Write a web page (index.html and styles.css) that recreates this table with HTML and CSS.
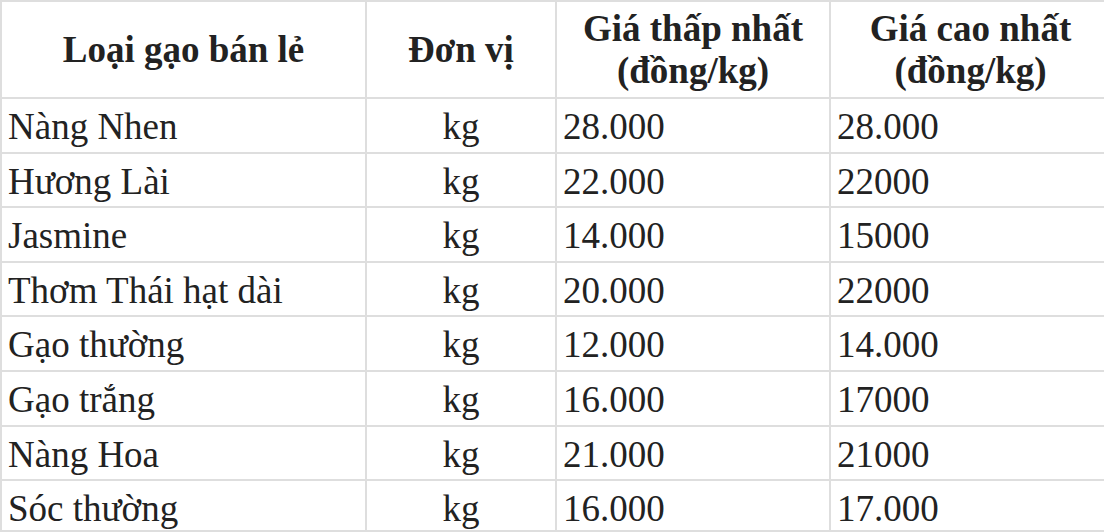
FILE: index.html
```html
<!DOCTYPE html>
<html lang="vi">
<head>
<meta charset="utf-8">
<title>Giá gạo bán lẻ</title>
<link rel="stylesheet" href="styles.css">
</head>
<body>
<table class="price-table">
  <colgroup>
    <col class="c-name">
    <col class="c-unit">
    <col class="c-low">
    <col class="c-high">
  </colgroup>
  <thead>
    <tr>
      <th>Loại gạo bán lẻ</th>
      <th>Đơn vị</th>
      <th>Giá thấp nhất<br>(đồng/kg)</th>
      <th>Giá cao nhất<br>(đồng/kg)</th>
    </tr>
  </thead>
  <tbody>
    <tr><td>Nàng Nhen</td><td class="unit">kg</td><td>28.000</td><td>28.000</td></tr>
    <tr><td>Hương Lài</td><td class="unit">kg</td><td>22.000</td><td>22000</td></tr>
    <tr><td>Jasmine</td><td class="unit">kg</td><td>14.000</td><td>15000</td></tr>
    <tr><td>Thơm Thái hạt dài</td><td class="unit">kg</td><td>20.000</td><td>22000</td></tr>
    <tr><td>Gạo thường</td><td class="unit">kg</td><td>12.000</td><td>14.000</td></tr>
    <tr><td>Gạo trắng</td><td class="unit">kg</td><td>16.000</td><td>17000</td></tr>
    <tr><td>Nàng Hoa</td><td class="unit">kg</td><td>21.000</td><td>21000</td></tr>
    <tr class="last"><td>Sóc thường</td><td class="unit">kg</td><td>16.000</td><td>17.000</td></tr>
  </tbody>
</table>
</body>
</html>
```
FILE: styles.css
```css
html, body {
  margin: 0;
  padding: 0;
  background: #fff;
  overflow: hidden;
}
.price-table {
  border-collapse: collapse;
  table-layout: fixed;
  width: 1110px;
  font-family: "Liberation Serif", "Times New Roman", serif;
  font-size: 37px;
  color: #222;
}
.c-name { width: 365px; }
.c-unit { width: 190px; }
.c-low { width: 274px; }
.c-high { width: 281px; }
.price-table th,
.price-table td {
  border: 2px solid #dedede;
  padding: 7px 6px 3.6px;
  line-height: 42px;
  vertical-align: middle;
}
.price-table th {
  font-weight: bold;
  text-align: center;
  height: 84px;
  padding: 6px 6px 5px;
}
.price-table td {
  text-align: left;
  height: 42px;
}
.price-table td.unit {
  text-align: center;
}
.price-table tr.last td {
  padding-bottom: 0;
}
```
